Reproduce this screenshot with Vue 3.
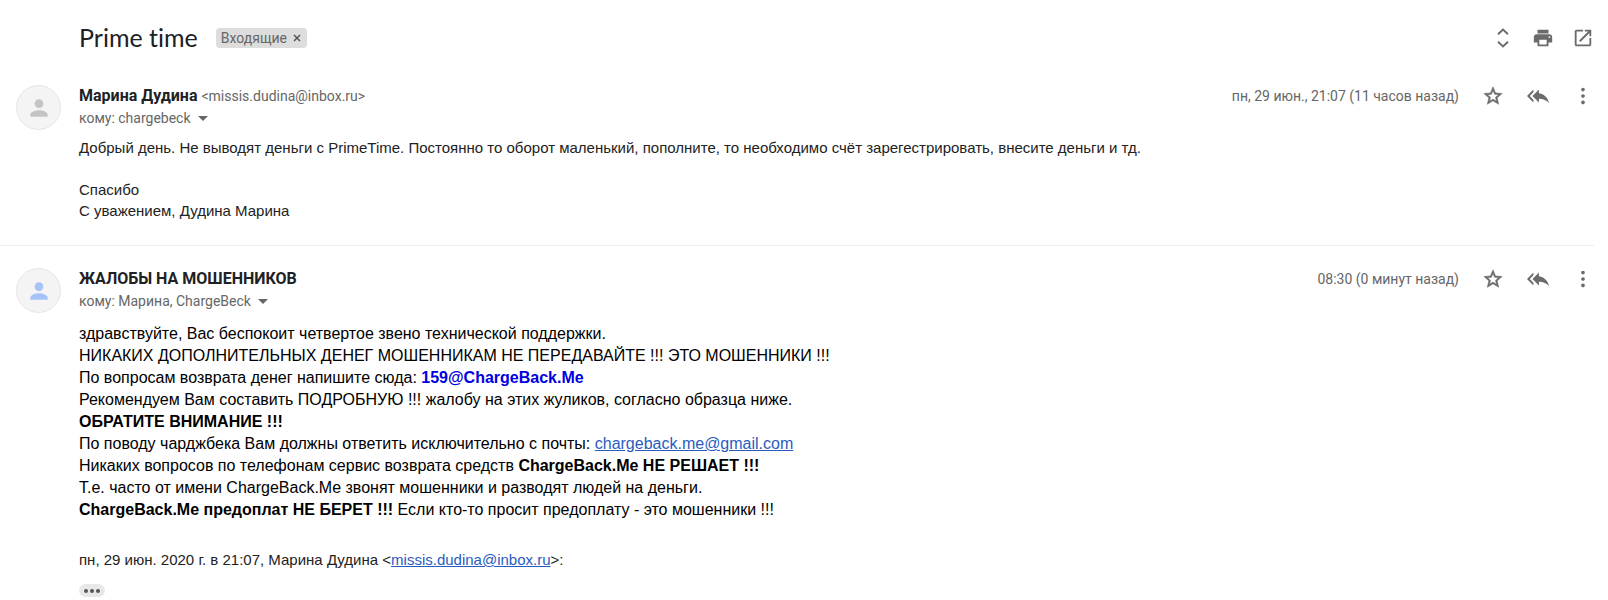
<script setup>
const messages = [
  {
    id: 'first',
    name: 'Марина Дудина',
    email: '<missis.dudina@inbox.ru>',
    to: 'кому: chargebeck',
    date: 'пн, 29 июн., 21:07 (11 часов назад)',
    tone: 'grey'
  },
  {
    id: 'second',
    name: 'ЖАЛОБЫ НА МОШЕННИКОВ',
    email: '',
    to: 'кому: Марина, ChargeBeck',
    date: '08:30 (0 минут назад)',
    tone: 'blue'
  }
]
</script>

<template>
  <main class="thread">
    <header class="subject">
      <h1>Prime time</h1>
      <span class="label">
        Входящие
        <button type="button" class="remove" aria-label="Удалить ярлык">
          <svg viewBox="0 0 8 8"><path d="M1 1l6 6M7 1L1 7" /></svg>
        </button>
      </span>
      <div class="tools">
        <button type="button" class="icon" aria-label="Развернуть все">
          <svg viewBox="0 0 22 22"><path class="line" d="M6 7.2L11 2.6l5 4.6M6 14.8l5 4.6 5-4.6" /></svg>
        </button>
        <button type="button" class="icon" aria-label="Печать">
          <svg viewBox="0 0 24 24"><path d="M19 8H5c-1.66 0-3 1.34-3 3v6h4v4h12v-4h4v-6c0-1.66-1.34-3-3-3zm-3 11H8v-5h8v5zm3-7c-.55 0-1-.45-1-1s.45-1 1-1 1 .45 1 1-.45 1-1 1zm-1-9H6v4h12V3z" /></svg>
        </button>
        <button type="button" class="icon" aria-label="В новом окне">
          <svg viewBox="0 0 24 24"><path d="M19 19H5V5h7V3H5c-1.11 0-2 .9-2 2v14c0 1.1.89 2 2 2h14c1.1 0 2-.9 2-2v-7h-2v7zM14 3v2h3.59l-9.83 9.83 1.41 1.41L19 6.41V10h2V3h-7z" /></svg>
        </button>
      </div>
    </header>

    <article v-for="m in messages" :key="m.id" class="message" :class="m.id">
      <div class="avatar" :class="m.tone">
        <svg viewBox="0 0 24 24"><path d="M12 12c2.21 0 4-1.79 4-4s-1.79-4-4-4-4 1.79-4 4 1.79 4 4 4zm0 2c-2.67 0-8 1.34-8 4v2h16v-2c0-2.66-5.33-4-8-4z" /></svg>
      </div>
      <div class="content">
        <div class="top">
          <h2>{{ m.name }}</h2>
          <span v-if="m.email" class="email">{{ m.email }}</span>
          <span class="date">{{ m.date }}</span>
          <div class="actions">
            <button type="button" class="icon" aria-label="Пометить">
              <svg viewBox="0 0 24 24"><path class="bold" d="M22 9.24l-7.19-.62L12 2 9.19 8.63 2 9.24l5.46 4.73L5.82 21 12 17.27 18.18 21l-1.63-7.03L22 9.24zM12 15.4l-3.76 2.27 1-4.28-3.32-2.88 4.38-.38L12 6.1l1.71 4.04 4.38.38-3.32 2.88 1 4.28L12 15.4z" /></svg>
            </button>
            <button type="button" class="icon" aria-label="Ответить всем">
              <svg viewBox="0 0 24 24"><path d="M7 8V5l-7 7 7 7v-3l-4-4 4-4zm6 1V5l-7 7 7 7v-4.1c5 0 8.5 1.6 11 5.1-1-5-4-10-11-11z" /></svg>
            </button>
            <button type="button" class="icon" aria-label="Ещё">
              <svg viewBox="0 0 24 24"><path d="M12 7c1.1 0 2-.9 2-2s-.9-2-2-2-2 .9-2 2 .9 2 2 2zm0 3c-1.1 0-2 .9-2 2s.9 2 2 2 2-.9 2-2-.9-2-2-2zm0 7c-1.1 0-2 .9-2 2s.9 2 2 2 2-.9 2-2-.9-2-2-2z" /></svg>
            </button>
          </div>
        </div>
        <button type="button" class="to">
          {{ m.to }}
          <svg viewBox="0 0 10 5"><path d="M0 0h10L5 5z" /></svg>
        </button>

        <div v-if="m.id === 'first'" class="text">
          <p>Добрый день. Не выводят деньги с PrimeTime. Постоянно то оборот маленький, пополните, то необходимо счёт зарегестрировать, внесите деньги и тд.</p>
          <br>
          <p>Спасибо</p>
          <p>С уважением, Дудина Марина</p>
        </div>
        <template v-else>
          <div class="text large">
            <p>здравствуйте, Вас беспокоит четвертое звено технической поддержки.</p>
            <p>НИКАКИХ ДОПОЛНИТЕЛЬНЫХ ДЕНЕГ МОШЕННИКАМ НЕ ПЕРЕДАВАЙТЕ !!! ЭТО МОШЕННИКИ !!!</p>
            <p>По вопросам возврата денег напишите сюда: <b class="contact">159@ChargeBack.Me</b></p>
            <p>Рекомендуем Вам составить ПОДРОБНУЮ !!! жалобу на этих жуликов, согласно образца ниже.</p>
            <p><b>ОБРАТИТЕ ВНИМАНИЕ !!!</b></p>
            <p>По поводу чарджбека Вам должны ответить исключительно с почты: <a href="mailto:chargeback.me@gmail.com">chargeback.me@gmail.com</a></p>
            <p>Никаких вопросов по телефонам сервис возврата средств <b>ChargeBack.Me НЕ РЕШАЕТ !!!</b></p>
            <p>Т.е. часто от имени ChargeBack.Me звонят мошенники и разводят людей на деньги.</p>
            <p><b>ChargeBack.Me предоплат НЕ БЕРЕТ !!!</b> Если кто-то просит предоплату - это мошенники !!!</p>
          </div>
          <p class="text quote">пн, 29 июн. 2020 г. в 21:07, Марина Дудина &lt;<a href="mailto:missis.dudina@inbox.ru">missis.dudina@inbox.ru</a>&gt;:</p>
          <button type="button" class="more" aria-label="Показать скрытый текст">
            <svg viewBox="0 0 18 4"><circle cx="3" cy="2" r="2" /><circle cx="9" cy="2" r="2" /><circle cx="15" cy="2" r="2" /></svg>
          </button>
        </template>
      </div>
    </article>
  </main>
</template>

<style>
body {
  margin: 0;
  background: #fff;
}
</style>

<style scoped>
.thread {
  padding-right: 14px;
  font-family: Roboto, "Liberation Sans", sans-serif;
  font-size: 14px;
  color: #666;
}
button {
  border: 0;
  padding: 0;
  background: none;
  font: inherit;
  color: inherit;
  cursor: pointer;
}
svg {
  display: block;
  fill: currentColor;
}
h1,
h2,
p {
  margin: 0;
}
.subject {
  display: flex;
  align-items: center;
  padding: 22px 0 0 79px;
  height: 32px;
}
h1 {
  padding-bottom: 2px;
  font-family: Lato, sans-serif;
  font-size: 25px;
  line-height: 30px;
  font-weight: 400;
  font-variant-ligatures: none;
  color: #202124;
}
.label {
  display: flex;
  align-items: center;
  gap: 6px;
  margin-left: 18px;
  padding: 0 6px 0 5px;
  border-radius: 4px;
  background: #ddd;
  color: #666;
  line-height: 20px;
}
.remove svg {
  width: 8px;
  height: 8px;
  stroke: #555;
  stroke-width: 1.5;
}
.tools {
  display: flex;
  gap: 18px;
  margin-left: auto;
}
.icon svg {
  width: 22px;
  height: 22px;
}
.icon {
  color: #6b6b6b;
}
.line {
  fill: none;
  stroke: currentColor;
  stroke-width: 2;
}
.bold {
  stroke: currentColor;
  stroke-width: 0.6;
}
.message {
  display: flex;
  align-items: flex-start;
  gap: 18px;
  padding: 31px 0 24px 16px;
}
.message.second {
  padding-top: 22px;
  border-top: 1px solid #eee;
}
.avatar {
  box-sizing: border-box;
  display: flex;
  align-items: center;
  justify-content: center;
  flex: none;
  width: 45px;
  height: 45px;
  border: 1px solid #e6e6e6;
  border-radius: 50%;
  background: #f4f4f4;
  color: #c4c4c4;
}
.avatar.blue {
  color: #a6c3f7;
}
.avatar svg {
  width: 26px;
  height: 26px;
}
.content {
  flex: 1;
  min-width: 0;
}
.top {
  display: flex;
  align-items: center;
  height: 22px;
}
h2 {
  font-size: 16px;
  line-height: 22px;
  font-weight: 700;
  color: #202124;
}
.email {
  margin-left: 4px;
}
.date {
  margin-left: auto;
}
.actions {
  display: flex;
  gap: 23px;
  margin-left: 23px;
}
.to {
  display: flex;
  align-items: center;
  gap: 7px;
  line-height: 22px;
}
.to svg {
  width: 10px;
  height: 5px;
}
.text {
  margin-top: 8px;
  font-family: "Liberation Sans", Arial, sans-serif;
  font-size: 15px;
  line-height: 21px;
  color: #222;
}
.large {
  margin-top: 11px;
  font-size: 16px;
  line-height: 22px;
  color: #000;
}
.contact {
  color: #0000e0;
}
a {
  color: #2a5bc0;
}
.quote {
  margin-top: 28px;
}
.more {
  display: flex;
  align-items: center;
  justify-content: center;
  width: 26px;
  height: 13px;
  margin-top: 14px;
  border-radius: 7px;
  background: #e8e8e8;
  color: #555;
}
.more svg {
  width: 18px;
  height: 4px;
}
</style>
